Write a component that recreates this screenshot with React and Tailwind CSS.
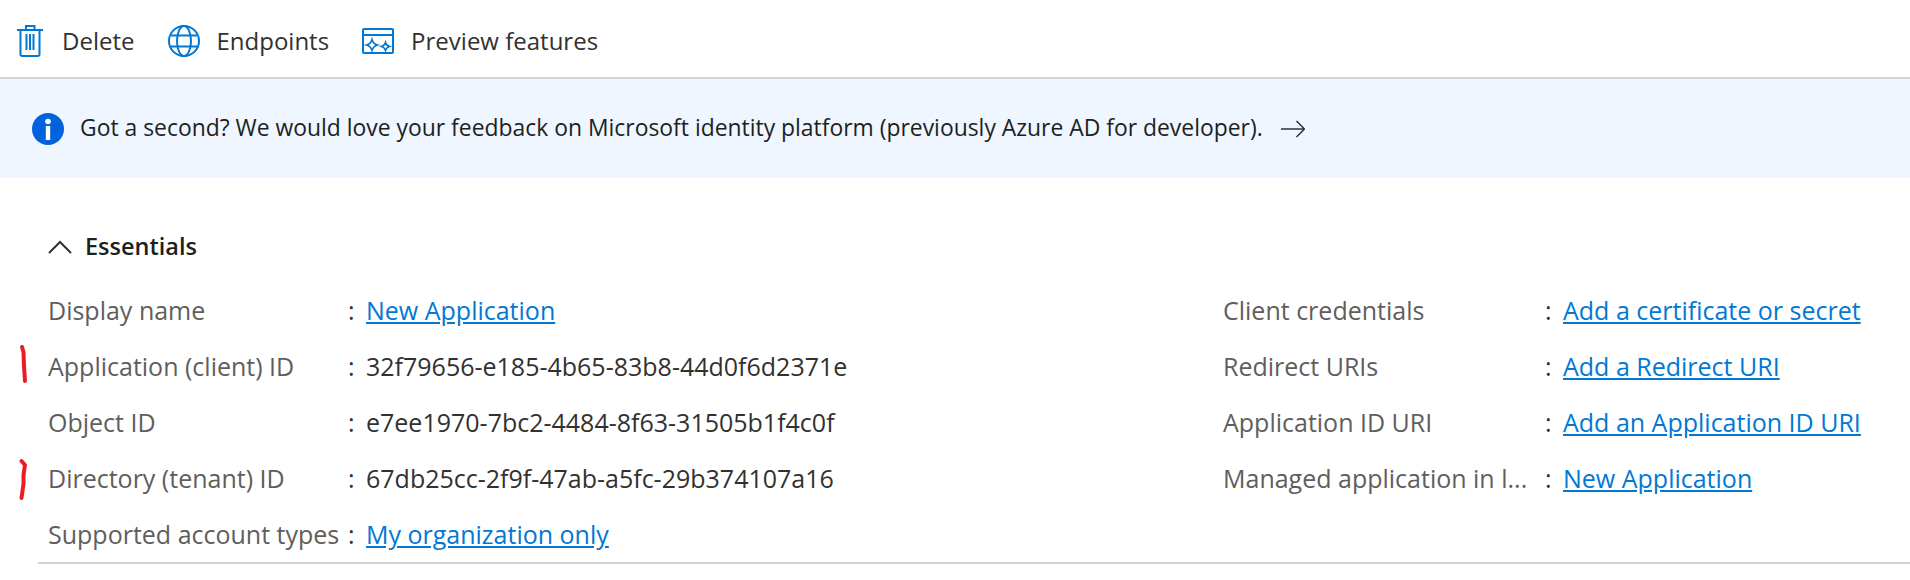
const font = "[font-family:'Open_Sans',sans-serif]";

const leftRows = [
  { label: "Display name", value: "New Application", link: true },
  { label: "Application (client) ID", value: "32f79656-e185-4b65-83b8-44d0f6d2371e" },
  { label: "Object ID", value: "e7ee1970-7bc2-4484-8f63-31505b1f4c0f" },
  { label: "Directory (tenant) ID", value: "67db25cc-2f9f-47ab-a5fc-29b374107a16" },
  { label: "Supported account types", value: "My organization only", link: true },
];

const rightRows = [
  { label: "Client credentials", value: "Add a certificate or secret" },
  { label: "Redirect URIs", value: "Add a Redirect URI" },
  { label: "Application ID URI", value: "Add an Application ID URI" },
  { label: "Managed application in l...", value: "New Application" },
];

const TrashIcon = () => (
  <svg width="26" height="32" viewBox="0 0 26 32" fill="none" stroke="#0078d4" strokeWidth="2">
    <path d="M0 5h26M9 5V1h8.500v4M3.500 5v24.500a1.500 1.500 0 0 0 1.500 1.500h16a1.500 1.500 0 0 0 1.500-1.500V5M9.500 9v16M13 9v16M16.500 9v16" />
  </svg>
);

const GlobeIcon = () => (
  <svg width="32" height="32" viewBox="0 0 32 32" fill="none" stroke="#0078d4" strokeWidth="2">
    <circle cx="16" cy="16" r="15" />
    <ellipse cx="16" cy="16" rx="7" ry="15" />
    <path d="M3 10.500h26M3 21.500h26" />
  </svg>
);

const PreviewIcon = () => (
  <svg width="32" height="26" viewBox="0 0 32 26" fill="none" stroke="#0078d4">
    <rect x="1" y="1" width="30" height="24" rx="1" strokeWidth="2" />
    <path d="M1 7h30" strokeWidth="2" />
    <path d="M10 11.500c.8 3 2.500 4.700 5.500 5.500-3 .8-4.700 2.500-5.500 5.500-.8-3-2.500-4.700-5.500-5.500 3-.8 4.700-2.500 5.500-5.500z" strokeWidth="1.600" />
    <path d="M23.500 14.500c.6 2.200 1.800 3.400 4 4-2.200.6-3.400 1.800-4 4-.6-2.200-1.800-3.400-4-4 2.200-.6 3.400-1.800 4-4z" strokeWidth="1.600" />
  </svg>
);

const InfoIcon = () => (
  <svg width="32" height="32" viewBox="0 0 32 32">
    <circle cx="16" cy="16" r="16" fill="#0062dc" />
    <circle cx="16" cy="8.500" r="2.800" fill="#fff" />
    <rect x="13.800" y="13" width="4.400" height="14" fill="#fff" />
  </svg>
);

const ToolButton = ({ icon, text, className }) => (
  <div className={`flex items-center ${className}`}>
    {icon}
    <span className="text-[24px] text-[#323130]">{text}</span>
  </div>
);

const Row = ({ label, value, link, labelWidth }) => (
  <div className="flex items-center h-[56px] pt-[2px] text-[25px]">
    <span className={`${labelWidth} text-[#605e5c] whitespace-nowrap`}>{label}</span>
    <span className="w-[18px] text-[#323130]">:</span>
    {link ? (
      <a className="text-[#0078d4] underline whitespace-nowrap">{value}</a>
    ) : (
      <span className="text-[#323130] whitespace-nowrap">{value}</span>
    )}
  </div>
);

export default function App() {
  return (
    <div className={`relative w-[1910px] h-[580px] bg-white overflow-hidden ${font}`}>
      <div className="flex items-center h-[77px] pt-[5px] pl-[17px]">
        <ToolButton icon={<TrashIcon />} text="Delete" className="gap-[19px] mr-[34px]" />
        <ToolButton icon={<GlobeIcon />} text="Endpoints" className="gap-[16px] mr-[33px]" />
        <ToolButton icon={<PreviewIcon />} text="Preview features" className="gap-[17px]" />
      </div>
      <div className="h-[2px] bg-[#d2d2d2]" />
      <div className="flex items-center h-[99px] pl-[32px] bg-[#eff6ff]">
        <InfoIcon />
        <span className="ml-[16px] text-[22.9px] text-[#201f1e] whitespace-nowrap">
          Got a second? We would love your feedback on Microsoft identity platform (previously Azure AD for developer).
        </span>
        <svg className="ml-[18px]" width="24" height="18" viewBox="0 0 24 18" fill="none" stroke="#323130" strokeWidth="1.500">
          <path d="M0 9h23M15.500 1l8 8-8 8" />
        </svg>
      </div>

      <div className="flex items-center mt-[47px] pl-[48px] h-[44px]">
        <svg width="24" height="14" viewBox="0 0 24 14" fill="none" stroke="#323130" strokeWidth="2">
          <path d="M1 13L12 2l11 11" />
        </svg>
        <span className="ml-[13px] text-[23.5px] font-semibold text-[#201f1e]">Essentials</span>
      </div>

      <div className="flex mt-[13px] pl-[48px]">
        <div className="w-[1175px]">
          {leftRows.map((r) => (
            <Row key={r.label} {...r} labelWidth="w-[300px]" />
          ))}
        </div>
        <div>
          {rightRows.map((r) => (
            <Row key={r.label} {...r} link labelWidth="w-[322px]" />
          ))}
        </div>
      </div>

      <div className="ml-[38px] h-[2px] bg-[#d2d2d2]" />

      {/* red pen marks */}
      <svg className="absolute left-0 top-[340px]" width="40" height="170" viewBox="0 0 40 170" fill="none" stroke="#ec1c24" strokeWidth="4" strokeLinecap="round" strokeLinejoin="round">
        <path d="M22 7l1.500 5 .5 14 1 15" />
        <path d="M21.500 121l3.500 4-1.500 10v9l-2 14" />
      </svg>
    </div>
  );
}
